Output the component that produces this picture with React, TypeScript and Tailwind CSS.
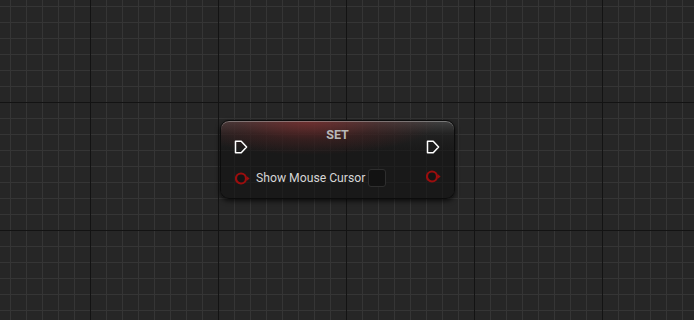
import React from 'react';

const W = 694;
const H = 320;

// grid lines: minor every 16px, major every 128px
const minorX = Array.from({ length: 44 }, (_, i) => 10 + i * 16);
const minorY = Array.from({ length: 20 }, (_, i) => 6 + i * 16);
const majorX = Array.from({ length: 5 }, (_, i) => 90 + i * 128);
const majorY = [102, 230];

function Grid() {
  return (
    <svg width={W} height={H} className="absolute inset-0">
      <rect width={W} height={H} fill="#262626" />
      {minorX.map((x) => (
        <rect key={`vx${x}`} x={x} y={0} width={1} height={H} fill="#353535" />
      ))}
      {minorY.map((y) => (
        <rect key={`hy${y}`} x={0} y={y} width={W} height={1} fill="#353535" />
      ))}
      {majorX.map((x) => (
        <rect key={`mx${x}`} x={x} y={0} width={1} height={H} fill="#131313" />
      ))}
      {majorY.map((y) => (
        <rect key={`my${y}`} x={0} y={y} width={W} height={1} fill="#131313" />
      ))}
    </svg>
  );
}

function ExecPin() {
  return (
    <svg width="14" height="14" viewBox="0 0 14 14">
      <path
        d="M1.5 1.2 H7.2 L12.6 7 L7.2 12.8 H1.5 Z"
        fill="none"
        stroke="#ffffff"
        strokeWidth="1.5"
        strokeLinejoin="round"
      />
    </svg>
  );
}

function DataPin() {
  return (
    <svg width="15" height="13" viewBox="0 0 15 13">
      <circle cx="6" cy="6.5" r="5" fill="#141414" stroke="#9a0e0e" strokeWidth="2.2" />
      <path d="M11.8 4.3 L14.6 6.5 L11.8 8.7 Z" fill="#9a0e0e" />
    </svg>
  );
}

export default function App() {
  return (
    <div className="relative w-[694px] h-[320px] overflow-hidden bg-[#262626] font-['Roboto','Liberation_Sans',sans-serif]">
      <Grid />

      {/* SET node */}
      <div className="absolute left-[220px] top-[120px] w-[235px] h-[79px] rounded-[9px] border border-[#0c0c0c] bg-[rgba(18,18,18,0.62)] bg-[radial-gradient(ellipse_130px_34px_at_88px_0px,rgba(130,40,40,0.7),rgba(100,32,32,0.32)_55%,transparent),linear-gradient(to_bottom,rgba(95,95,95,0.55),rgba(60,60,60,0.2)_14px,transparent_30px)] shadow-[inset_0_1px_0_rgba(190,190,190,0.45),0_2px_5px_rgba(0,0,0,0.7)] pt-[8px] pb-[11px]">
        <div className="h-[12px] leading-[12px] text-center text-[12.5px] font-bold text-[#b8b8b8]">
          SET
        </div>

        <div className="flex items-center justify-between mt-[-1px] pl-[13px] pr-[14px] h-[14px]">
          <ExecPin />
          <ExecPin />
        </div>

        <div className="flex items-center mt-[15px] h-[18px] pl-[14px] pr-[14px]">
          <DataPin />
          <span className="ml-[6px] text-[12.2px] leading-[18px] text-[#d6d6d6]">
            Show Mouse Cursor
          </span>
          <div className="ml-[3px] w-[18px] h-[18px] rounded-[3px] bg-[#121212] border border-[#2e2e2e]" />
          <div className="ml-auto mr-[-1px] mt-[-3px]">
            <DataPin />
          </div>
        </div>
      </div>
    </div>
  );
}
